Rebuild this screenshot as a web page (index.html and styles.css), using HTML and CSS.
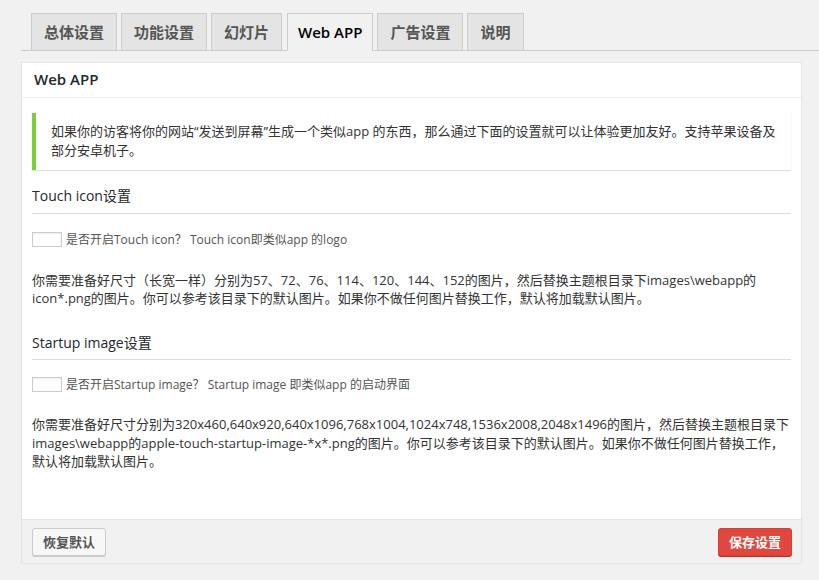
FILE: index.html
```html
<!DOCTYPE html>
<html lang="zh-CN">
<head>
<meta charset="utf-8">
<title>Web APP 设置</title>
<link rel="stylesheet" href="styles.css">
</head>
<body>
<div class="wrap">
  <nav class="tabs">
    <a class="tab">总体设置</a>
    <a class="tab">功能设置</a>
    <a class="tab">幻灯片</a>
    <a class="tab active">Web APP</a>
    <a class="tab">广告设置</a>
    <a class="tab">说明</a>
  </nav>
  <section class="panel">
    <header class="panel-head">Web APP</header>
    <div class="panel-body">
      <div class="notice">如果你的访客将你的网站“发送到屏幕”生成一个类似app 的东西，那么通过下面的设置就可以让体验更加友好。支持苹果设备及部分安卓机子。</div>

      <h3 class="section-title">Touch icon设置</h3>
      <label class="check-row"><span class="check"></span><span class="check-label">是否开启Touch icon？ Touch icon即类似app 的logo</span></label>
      <p class="desc">你需要准备好尺寸（长宽一样）分别为57、72、76、114、120、144、152的图片，然后替换主题根目录下images\webapp的icon*.png的图片。你可以参考该目录下的默认图片。如果你不做任何图片替换工作，默认将加载默认图片。</p>

      <h3 class="section-title second">Startup image设置</h3>
      <label class="check-row second"><span class="check"></span><span class="check-label">是否开启Startup image？ Startup image 即类似app 的启动界面</span></label>
      <p class="desc desc2">你需要准备好尺寸分别为320x460,640x920,640x1096,768x1004,1024x748,1536x2008,2048x1496的图片，然后替换主题根目录下images\webapp的apple-touch-startup-image-*x*.png的图片。你可以参考该目录下的默认图片。如果你不做任何图片替换工作，默认将加载默认图片。</p>
    </div>
    <footer class="panel-foot">
      <button class="btn">恢复默认</button>
      <button class="btn btn-primary">保存设置</button>
    </footer>
  </section>
</div>
</body>
</html>
```

FILE: styles.css
```css
* { box-sizing: border-box; }
html, body { margin: 0; padding: 0; }
body {
  background: #f1f1f1;
  font-family: "Open Sans", "Noto Sans CJK SC", sans-serif;
  color: #333;
  font-size: 13px;
}
.wrap {
  padding: 13px 0 0 21px;
}
.tabs {
  display: flex;
  gap: 4px;
  padding-left: 10px;
  border-bottom: 1px solid #ccc;
  height: 38px;
}
.tab {
  display: block;
  height: 38px;
  padding: 0 12px;
  border: 1px solid #ccc;
  background: #e4e4e4;
  color: #555;
  font-size: 15px;
  font-weight: 600;
  line-height: 36px;
  white-space: nowrap;
}
.tab.active {
  background: #f1f1f1;
  color: #000;
  border-bottom-color: #f1f1f1;
  padding: 0 10px;
  margin-left: 1px;
}
.panel {
  margin: 11px 17px 0 0;
  background: #fff;
  border: 1px solid #e5e5e5;
  box-shadow: 0 1px 1px rgba(0,0,0,0.04);
}
.panel-head {
  height: 35px;
  padding: 0 12px;
  border-bottom: 1px solid #eee;
  font-size: 15px;
  font-weight: 600;
  line-height: 33px;
  color: #23282d;
}
.panel-body {
  padding: 15px 10px 48px 10px;
}
.notice {
  border-left: 4px solid #7ad03a;
  background: #fff;
  box-shadow: 0 1px 1px rgba(0,0,0,0.12);
  padding: 9px 10px 10px 15px;
  font-size: 13px;
  line-height: 19px;
  color: #333;
}
.section-title {
  margin: 16px 0 0;
  padding-bottom: 7px;
  border-bottom: 1px solid #ddd;
  font-size: 14px;
  font-weight: 400;
  line-height: 20px;
  color: #23282d;
}
.section-title.second { margin-top: 26px; padding-bottom: 6px; }
.check-row {
  display: flex;
  align-items: center;
  gap: 4px;
  margin-top: 18px;
  height: 15px;
}
.check-row.second { margin-top: 17px; }
.check {
  display: block;
  width: 30px;
  height: 15px;
  border: 1px solid #ccc;
  background: #fff;
  box-shadow: inset 0 1px 2px rgba(0,0,0,0.07);
}
.check-label {
  font-size: 12px;
  color: #555;
  line-height: 15px;
}
.desc {
  margin: 24px 0 0;
  font-size: 13px;
  line-height: 18px;
  color: #333;
  padding-right: 30px;
}
.desc2 { margin-top: 23px; line-height: 18.5px; padding-right: 0; }
.panel-foot {
  display: flex;
  justify-content: space-between;
  padding: 8px 9px 7px 10px;
  background: #f1f1f1;
  border-top: 1px solid #e5e5e5;
}
.btn {
  height: 28px;
  padding: 0 10px;
  border: 1px solid #ccc;
  border-radius: 3px;
  background: #f7f7f7;
  box-shadow: 0 1px 0 #ccc;
  color: #555;
  font-family: "Open Sans", "Noto Sans CJK SC", sans-serif;
  font-size: 13px;
  font-weight: 700;
  line-height: 26px;
}
.btn-primary {
  background: #e0483e;
  border-color: #d43f3a;
  box-shadow: 0 1px 0 #b9342b;
  color: #fff;
}
```
